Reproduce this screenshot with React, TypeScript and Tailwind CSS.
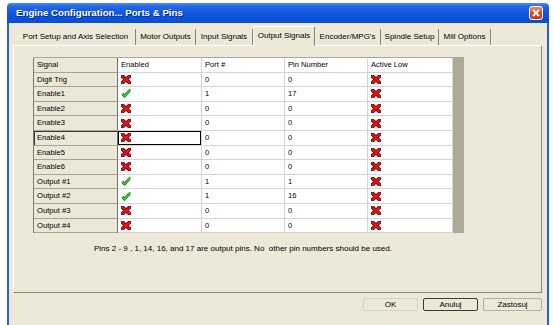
type Flag = "x" | "check"

type SignalRow = {
  signal: string
  enabled: Flag
  port: string
  pin: string
  activeLow: Flag
  focused?: boolean
}

const rows: SignalRow[] = [
  { signal: "Digit Trig", enabled: "x", port: "0", pin: "0", activeLow: "x" },
  { signal: "Enable1", enabled: "check", port: "1", pin: "17", activeLow: "x" },
  { signal: "Enable2", enabled: "x", port: "0", pin: "0", activeLow: "x" },
  { signal: "Enable3", enabled: "x", port: "0", pin: "0", activeLow: "x" },
  { signal: "Enable4", enabled: "x", port: "0", pin: "0", activeLow: "x", focused: true },
  { signal: "Enable5", enabled: "x", port: "0", pin: "0", activeLow: "x" },
  { signal: "Enable6", enabled: "x", port: "0", pin: "0", activeLow: "x" },
  { signal: "Output #1", enabled: "check", port: "1", pin: "1", activeLow: "x" },
  { signal: "Output #2", enabled: "check", port: "1", pin: "16", activeLow: "x" },
  { signal: "Output #3", enabled: "x", port: "0", pin: "0", activeLow: "x" },
  { signal: "Output #4", enabled: "x", port: "0", pin: "0", activeLow: "x" },
]

const tabs = [
  { label: "Port Setup and Axis Selection", width: "w-[120px]" },
  { label: "Motor Outputs", width: "w-[60px]" },
  { label: "Input Signals", width: "w-[57px]" },
  { label: "Output Signals", width: "w-[62px]", active: true },
  { label: "Encoder/MPG's", width: "w-[66px]" },
  { label: "Spindle Setup", width: "w-[58px]" },
  { label: "Mill Options", width: "w-[52px]" },
]

function RedX() {
  return (
    <svg width="10" height="9" viewBox="0 0 10 9">
      <path d="M1.6 1.4 L8.4 7.6 M8.4 1.4 L1.6 7.6" stroke="#5c0000" strokeWidth="3.6" strokeLinecap="square" />
      <path d="M1.6 1.4 L8.4 7.6 M8.4 1.4 L1.6 7.6" stroke="#e3161a" strokeWidth="2" strokeLinecap="square" />
    </svg>
  )
}

function GreenCheck() {
  return (
    <svg width="10" height="9" viewBox="0 0 10 9">
      <path d="M1.4 4.8 L3.6 7.2 L8.4 1.6 L9.4 1.6" stroke="#1d5e12" strokeWidth="2.8" fill="none" strokeLinejoin="round" />
      <path d="M1.4 4.8 L3.6 7.2 L8.4 1.6 L9.4 1.6" stroke="#3fd23a" strokeWidth="1.5" fill="none" strokeLinejoin="round" />
    </svg>
  )
}

function FlagIcon({ value }: { value: Flag }) {
  return value === "x" ? <RedX /> : <GreenCheck />
}

function SignalTable() {
  const white = "flex h-[14.6px] items-center border-b border-r border-[#d4d4d4] bg-white pl-[3px]"
  const beige = "flex h-[14.6px] items-center border-b border-r border-b-[#a8a596] border-r-[#6e6e6e] bg-[#ebe8d8] pl-[3px]"

  return (
    <div className="flex w-[431px]">
      <div className="grid grid-cols-[84px_84px_83px_83px_85px] border-l border-t border-l-[#7c7c7c] border-t-[#a8a8a8] text-[7.6px] leading-none text-black">
        <div className={beige}>Signal</div>
        <div className={white}>Enabled</div>
        <div className={white}>Port #</div>
        <div className={white}>Pin Number</div>
        <div className={white}>Active Low</div>

        {rows.map((row) => (
          <div key={row.signal} className="contents">
            <div
              className={`${beige} ${row.focused ? "shadow-[inset_0_1px_0_#3a3a3a,inset_1px_0_0_#3a3a3a]" : ""}`}
            >
              {row.signal}
            </div>
            <div className={`${white} ${row.focused ? "shadow-[inset_0_0_0_1px_#000]" : ""}`}>
              <FlagIcon value={row.enabled} />
            </div>
            <div className={white}>{row.port}</div>
            <div className={white}>{row.pin}</div>
            <div className={white}>
              <FlagIcon value={row.activeLow} />
            </div>
          </div>
        ))}
      </div>
      <div className="w-[12px] self-stretch bg-[#aeaa98]" />
    </div>
  )
}

export default function App() {
  return (
    <div className="h-[325px] w-[553px] overflow-hidden bg-white font-['Liberation_Sans',Arial,sans-serif]">
      <div className="ml-[7px] mt-[3px] flex h-[322px] w-[542px] flex-col">
        <div className="flex h-[20px] items-center justify-between rounded-t-[4px] bg-[linear-gradient(to_bottom,#4a8cf6_0%,#2567e6_18%,#0c55dc_55%,#0a4fd4_100%)] pl-[9px] pr-[6px]">
          <span className="text-[9.7px] font-bold text-white [text-shadow:1px_1px_0_#0a2a86]">
            Engine Configuration... Ports &amp; Pins
          </span>
          <div className="flex h-[14px] w-[14px] items-center justify-center rounded-[3px] border border-white bg-[linear-gradient(to_bottom,#f08c6c,#d8482a_50%,#c33a1c)]">
            <svg width="8" height="8" viewBox="0 0 8 8">
              <path d="M1 1 L7 7 M7 1 L1 7" stroke="white" strokeWidth="1.8" />
            </svg>
          </div>
        </div>

        <div className="flex flex-1 flex-col border-x-2 border-[#2b5fd8] bg-[#ece9d8] text-[8px] leading-none text-black">
          <div className="flex h-[22px] items-end pl-[7px]">
            {tabs.map((tab) =>
              tab.active ? (
                <div
                  key={tab.label}
                  className={`${tab.width} relative z-10 -mb-px flex h-[20px] items-center justify-center border-l border-r border-t border-l-white border-r-[#8a877a] border-t-white bg-[#ece9d8] pb-[2px]`}
                >
                  {tab.label}
                </div>
              ) : (
                <div
                  key={tab.label}
                  className={`${tab.width} flex h-[16px] items-center justify-center border-r border-[#8a877a]`}
                >
                  {tab.label}
                </div>
              )
            )}
          </div>

          <div className="ml-[4px] flex h-[248px] w-[529px] flex-col border border-b-[#8a877a] border-l-white border-r-[#8a877a] border-t-white pl-[19px] pt-[11px]">
            <SignalTable />
            <p className="ml-[61px] mt-[12px]">
              Pins 2 - 9 , 1, 14, 16, and 17 are output pins. No&nbsp; other pin numbers should be used.
            </p>
          </div>

          <div className="mt-[5px] flex justify-end gap-[5px] pr-[5px]">
            <button className="h-[13px] w-[55px] rounded-[2px] border border-[#d6d3c6] bg-[#ece9d8]">OK</button>
            <button className="h-[13px] w-[55px] rounded-[2px] border border-[#3c3c3c] bg-[#ece9d8]">Anuluj</button>
            <button className="h-[13px] w-[59px] rounded-[2px] border border-[#b4b1a4] bg-[#ece9d8]">Zastosuj</button>
          </div>
        </div>
      </div>
    </div>
  )
}
